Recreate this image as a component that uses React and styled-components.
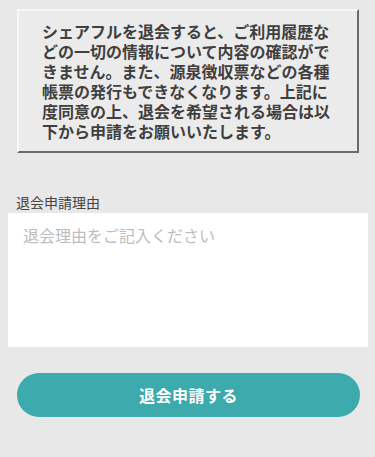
import styled, { createGlobalStyle } from "styled-components";

const GlobalStyle = createGlobalStyle`
  html, body {
    margin: 0;
    padding: 0;
    background: #e8e8e8;
  }
  body {
    font-family: "Noto Sans CJK JP", "Noto Sans", sans-serif;
  }
`;

export default function App() {
  return (
    <>
      <GlobalStyle />
      <Page>
        <Notice>
          シェアフルを退会すると、ご利用履歴などの一切の情報について内容の確認ができません。また、源泉徴収票などの各種帳票の発行もできなくなります。上記に度同意の上、退会を希望される場合は以下から申請をお願いいたします。
        </Notice>
        <Field>
          <Label htmlFor="reason">退会申請理由</Label>
          <Reason id="reason" placeholder="退会理由をご記入ください" />
        </Field>
        <Submit type="button">退会申請する</Submit>
      </Page>
    </>
  );
}

const Page = styled.div`
  width: 375px;
  height: 457px;
  padding-top: 9px;
  box-sizing: border-box;
  display: flex;
  flex-direction: column;
`;

const Notice = styled.div`
  margin: 0 16px 0 17px;
  height: 144px;
  box-sizing: border-box;
  padding: 10px 22px 10px 23px;
  border: 2px solid;
  border-color: #f7f7f7 #6a6a6a #6a6a6a #f7f7f7;
  background: #ebebeb;
  color: #3f3f3f;
  font-size: 16px;
  font-weight: 700;
  line-height: 20px;
  word-break: break-all;
`;

const Field = styled.div`
  margin-top: 39px;
  display: flex;
  flex-direction: column;
`;

const Label = styled.label`
  margin-left: 16px;
  font-size: 14px;
  line-height: 21px;
  color: #444;
`;

const Reason = styled.textarea`
  margin: 0 7px 0 8px;
  height: 134px;
  box-sizing: border-box;
  padding: 10px 15px;
  border: none;
  outline: none;
  resize: none;
  background: #fff;
  font-family: inherit;
  font-size: 16px;
  line-height: 24px;
  color: #333;
  &::placeholder {
    color: #bdbdbd;
  }
`;

const Submit = styled.button`
  margin: 26px 15px 0 17px;
  height: 44px;
  border: none;
  border-radius: 22px;
  background: #3daaae;
  color: #fff;
  font-family: inherit;
  font-size: 16px;
  font-weight: 700;
  letter-spacing: 0.5px;
  cursor: pointer;
`;
